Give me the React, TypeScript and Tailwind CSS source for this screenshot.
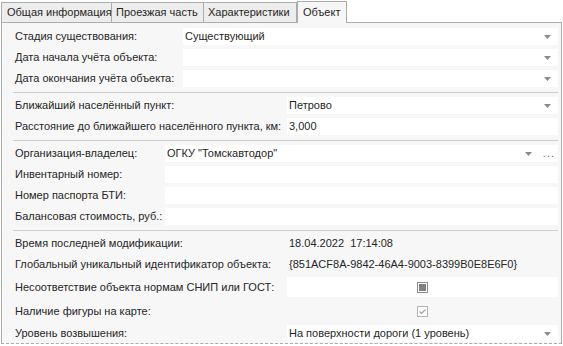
import React from "react"

const font = { fontFamily: '"Liberation Sans", Arial, sans-serif' }

function Arrow() {
  return (
    <svg width="7" height="4" viewBox="0 0 7 4" className="shrink-0">
      <polygon points="0,0 7,0 3.5,4" fill="#8a8a8a" />
    </svg>
  )
}

function Field({ value, combo, dots }: { value?: string; combo?: boolean; dots?: boolean }) {
  return (
    <div className="flex-1 h-[17px] bg-white flex items-center pl-[2px] pr-[7px]">
      <span className="flex-1 truncate">{value}</span>
      {combo && <Arrow />}
      {dots && <span className="ml-[11px] -mr-[4px] text-[#666] leading-none tracking-[1px] text-[11px]">...</span>}
    </div>
  )
}

function Row({ label, w, children }: { label: string; w: number; children?: React.ReactNode }) {
  return (
    <div className="flex items-center h-[17px]">
      <div className="shrink-0 whitespace-nowrap" style={{ width: w }}>{label}</div>
      {children}
    </div>
  )
}

function Sep() {
  return <div className="h-px mt-px -ml-[2px] bg-[#cfcfcf]" />
}

export default function App() {
  return (
    <div className="w-[563px] h-[346px] bg-white text-[11px] text-[#262626] overflow-hidden" style={font}>
      <div className="flex items-end h-[22px] pl-[1px] whitespace-nowrap">
        <div className="w-[111px] h-[20px] border border-b-0 border-[#acacac] bg-[#ededed] px-[5px] leading-[19px]">Общая информация</div>
        <div className="w-[92px] h-[20px] border border-b-0 border-l-0 border-[#acacac] bg-[#ededed] px-[4px] leading-[19px]">Проезжая часть</div>
        <div className="w-[93px] h-[20px] border border-b-0 border-l-0 border-[#acacac] bg-[#ededed] px-[4px] leading-[19px]">Характеристики</div>
        <div className="w-[50px] h-[22px] border border-b-0 border-[#acacac] bg-[#f7f7f7] px-[5px] leading-[20px] relative z-10 -mb-px">Объект</div>
      </div>
      <div className="ml-[1px] w-[561px] h-[322px] border border-[#acacac] bg-[#f7f7f7] pl-[13px] pr-[3px] pt-[5px] flex flex-col gap-[4px]" style={{ borderStyle: "solid solid dashed solid" }}>
        <Row label="Стадия существования:" w={168}><Field value="Существующий" combo /></Row>
        <Row label="Дата начала учёта объекта:" w={168}><Field combo /></Row>
        <Row label="Дата окончания учёта объекта:" w={168}><Field combo /></Row>
        <Sep />
        <Row label="Ближайший населённый пункт:" w={272}><Field value="Петрово" combo /></Row>
        <Row label="Расстояние до ближайшего населённого пункта, км:" w={272}><Field value="3,000" /></Row>
        <Sep />
        <Row label="Организация-владелец:" w={150}><Field value='ОГКУ "Томскавтодор"' combo dots /></Row>
        <Row label="Инвентарный номер:" w={150}><Field /></Row>
        <Row label="Номер паспорта БТИ:" w={150}><Field /></Row>
        <Row label="Балансовая стоимость, руб.:" w={150}><Field /></Row>
        <Sep />
        <Row label="Время последней модификации:" w={272}><span className="pl-[2px]">18.04.2022&nbsp;&nbsp;17:14:08</span></Row>
        <Row label="Глобальный уникальный идентификатор объекта:" w={272}><span className="pl-[2px]">{"{851ACF8A-9842-46A4-9003-8399B0E8E6F0}"}</span></Row>
        <div className="flex items-center h-[20px]">
          <div className="shrink-0 w-[272px] whitespace-nowrap">Несоответствие объекта нормам СНИП или ГОСТ:</div>
          <div className="flex-1 h-[20px] bg-white flex items-center justify-center">
            <div className="w-[11px] h-[11px] border border-[#8c8c8c] bg-white flex items-center justify-center">
              <div className="w-[7px] h-[7px] bg-[#808080]" />
            </div>
          </div>
        </div>
        <div className="flex items-center h-[20px]">
          <div className="shrink-0 w-[272px] whitespace-nowrap">Наличие фигуры на карте:</div>
          <div className="flex-1 h-[20px] flex items-center justify-center">
            <div className="w-[11px] h-[11px] border border-[#b4b4b4] bg-white flex items-center justify-center">
              <svg width="9" height="9" viewBox="0 0 9 9">
                <path d="M1.5 4.5 L3.5 6.5 L7.5 2.5" fill="none" stroke="#a0a0a0" strokeWidth="1.2" />
              </svg>
            </div>
          </div>
        </div>
        <Row label="Уровень возвышения:" w={272}><Field value="На поверхности дороги (1 уровень)" combo /></Row>
      </div>
    </div>
  )
}
